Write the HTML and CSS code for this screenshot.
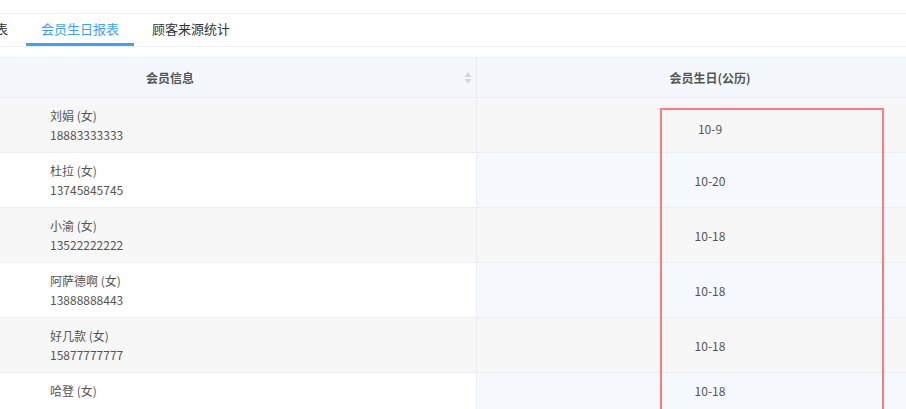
FILE: index.html
```
<!DOCTYPE html>
<html lang="zh-CN">
<head>
    <meta charset="UTF-8">
    <meta name="viewport" content="width=device-width, initial-scale=1.0">
    <title>会员生日报表</title>
    <link rel="stylesheet" href="styles.css">
</head>
<body>
    <div class="page">
        <div class="tabs">
            <div class="tab-list">
                <div class="tab">会员消费报表</div>
                <div class="tab active">会员生日报表</div>
                <div class="tab">顾客来源统计</div>
            </div>
        </div>

        <div class="table-wrap">
            <div class="table">
                <div class="row head">
                    <div class="cell info">
                        会员信息
                        <svg class="sort" width="8" height="14" viewBox="0 0 8 14">
                            <path d="M4 1 L7.5 6 L0.5 6 Z" fill="#d3d6dc"/>
                            <path d="M4 13 L7.5 8 L0.5 8 Z" fill="#d3d6dc"/>
                        </svg>
                    </div>
                    <div class="cell birth">会员生日(公历)</div>
                </div>

                <div class="row odd">
                    <div class="cell info"><div class="name">刘娟 (女)</div><div class="phone">18883333333</div></div>
                    <div class="cell birth first">10-9</div>
                </div>
                <div class="row even">
                    <div class="cell info"><div class="name">杜拉 (女)</div><div class="phone">13745845745</div></div>
                    <div class="cell birth">10-20</div>
                </div>
                <div class="row odd">
                    <div class="cell info"><div class="name">小渝 (女)</div><div class="phone">13522222222</div></div>
                    <div class="cell birth">10-18</div>
                </div>
                <div class="row even">
                    <div class="cell info"><div class="name">阿萨德啊 (女)</div><div class="phone">13888888443</div></div>
                    <div class="cell birth">10-18</div>
                </div>
                <div class="row odd">
                    <div class="cell info"><div class="name">好几款 (女)</div><div class="phone">15877777777</div></div>
                    <div class="cell birth">10-18</div>
                </div>
                <div class="row even">
                    <div class="cell info last"><div class="name">哈登 (女)</div></div>
                    <div class="cell birth last">10-18</div>
                </div>
            </div>
            <div class="highlight"></div>
        </div>
    </div>
</body>
</html>
```

FILE: styles.css
```
body {
    margin: 0;
    padding: 0;
    background-color: #fff;
    font-family: "Noto Sans CJK SC", "Noto Sans", sans-serif;
    color: #606266;
    overflow: hidden;
}
.page {
    padding-top: 13px;
    height: 409px;
    overflow: hidden;
}
.tabs {
    border-top: 1px solid #eef0f3;
    border-bottom: 1px solid #eef0f3;
    height: 32px;
    overflow: hidden;
}
.tab-list {
    display: flex;
    margin-left: -85px;
    height: 32px;
}
.tab {
    padding: 0 15px;
    font-size: 13px;
    line-height: 29px;
    color: #333;
    border-bottom: 3px solid transparent;
    margin-right: 3px;
}
.tab.active {
    color: #409eff;
    border-bottom-color: #409eff;
}
.table-wrap {
    position: relative;
    margin-top: 10px;
    margin-left: -139px;
    width: 1082px;
}
.table {
    border-top: 1px solid #ebeef5;
}
.row {
    display: grid;
    grid-template-columns: 616px 1fr;
    height: 54px;
    border-bottom: 1px solid #ebeef5;
    font-size: 12px;
}
.row.head {
    height: 39px;
    background-color: #f4f8fc;
    font-weight: bold;
    color: #333;
}
.cell {
    display: flex;
    flex-direction: column;
    justify-content: center;
}
.row.head .cell {
    position: relative;
    padding-left: 285px;
}
.row.head .cell.birth {
    padding-left: 0;
    align-items: center;
}
.row.head .info {
    border-right: 1px solid #e8ecf1;
}
.row .info {
    padding-left: 189px;
    border-right: 1px solid #ebeef5;
    line-height: 19px;
    color: #555;
}
.row .info.last {
    justify-content: flex-start;
    padding-top: 8px;
}
.sort {
    position: absolute;
    right: 4px;
    top: 13px;
}
.birth {
    align-items: center;
    color: #555;
}
.row.odd {
    background-color: #f7f7f7;
}
.row.even .info {
    background-color: #fff;
}
.row.even .birth {
    background-color: #f5f9fd;
}
.birth.first {
    padding-top: 6px;
}
.birth.last {
    justify-content: flex-start;
    padding-top: 9px;
}
.highlight {
    position: absolute;
    left: 799px;
    top: 51px;
    width: 220px;
    height: 400px;
    border: 2px solid #ff7b7b;
}
```
